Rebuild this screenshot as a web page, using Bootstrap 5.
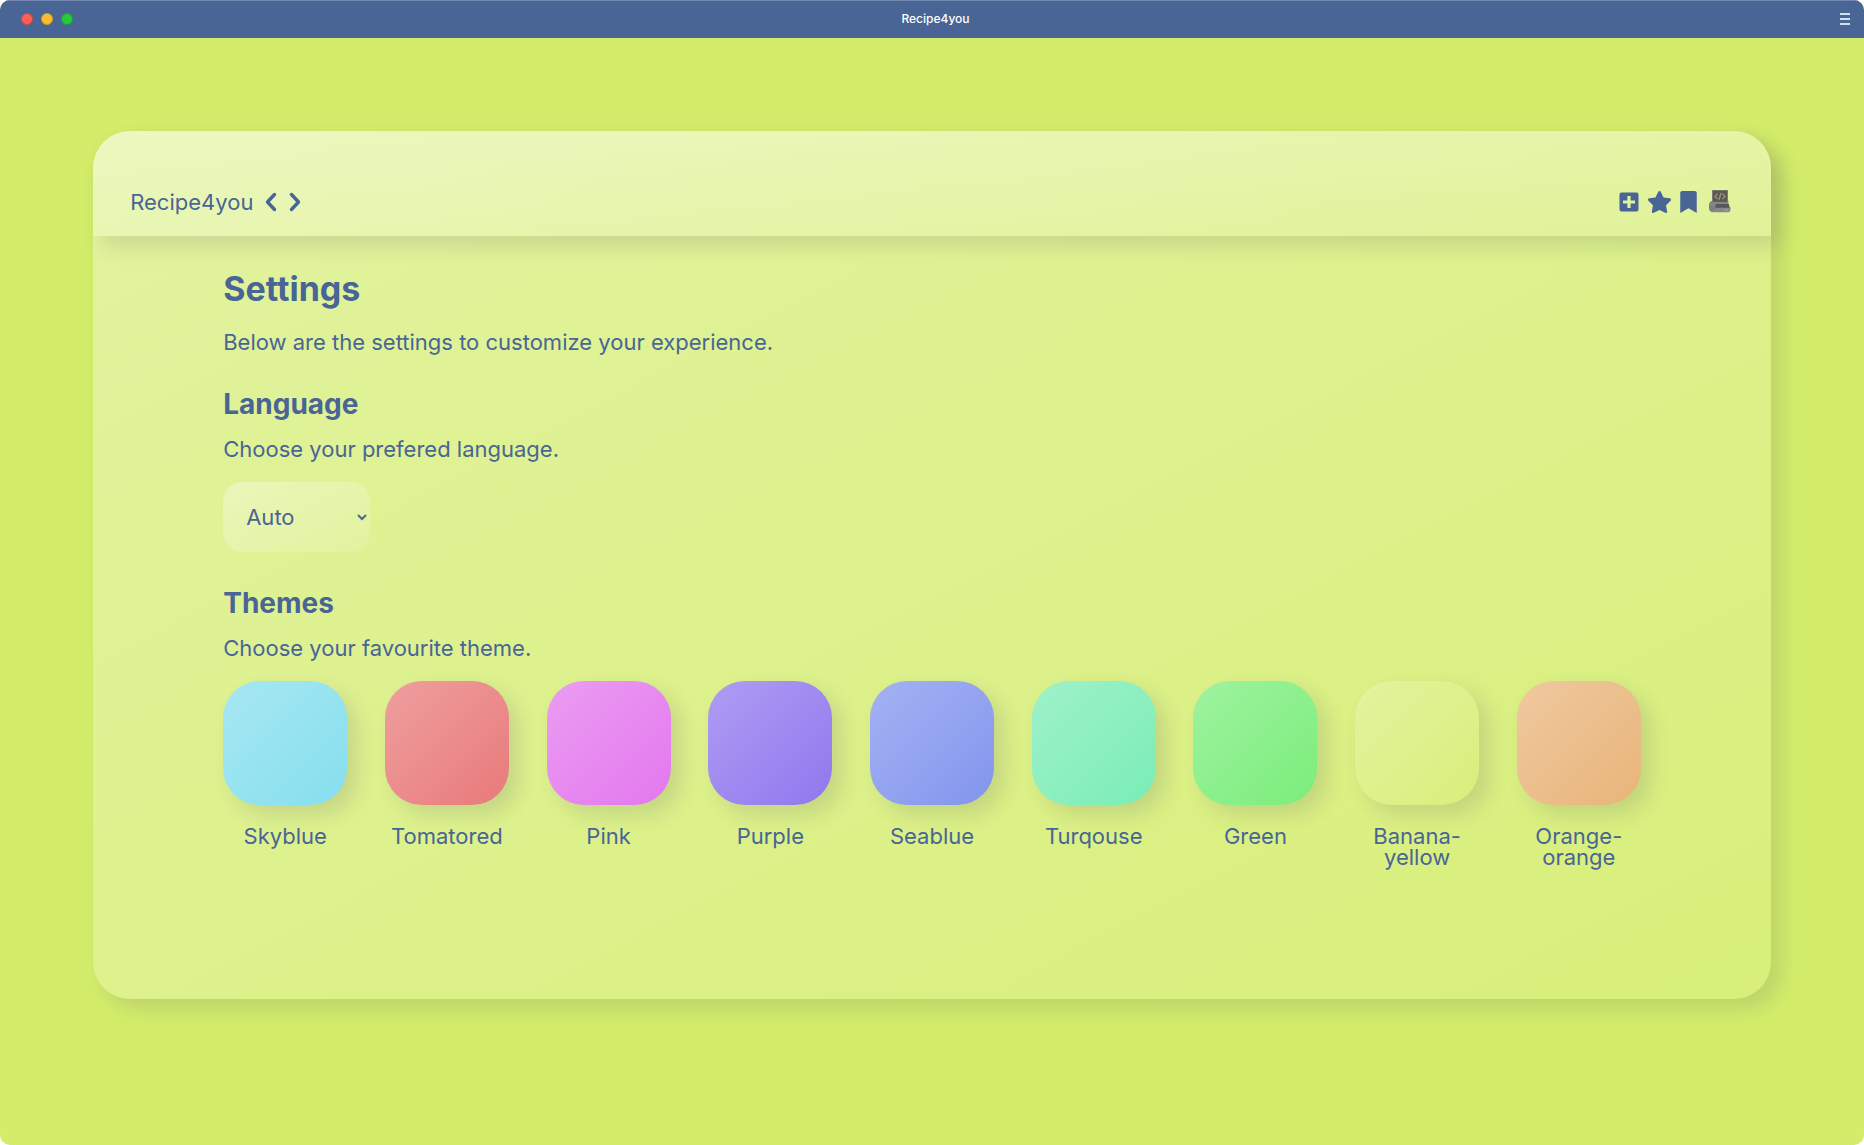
<!DOCTYPE html>
<html lang="en">
<head>
<meta charset="utf-8">
<meta name="viewport" content="width=device-width, initial-scale=1">
<title>Recipe4you</title>
<link href="https://cdn.jsdelivr.net/npm/bootstrap@5.3.0/dist/css/bootstrap.min.css" rel="stylesheet">
<style>
  :root {
    --ink: #496595;
    --page: #d3ed6b;
    --shade: rgba(66, 66, 104, .15);
  }
  body { background: #fff; color: var(--ink); font-family: Inter, "Open Sans", sans-serif; font-size: 22px; line-height: 30px; }
  .app-window { background: var(--page); border-radius: 10px; overflow: hidden; }
  .titlebar { height: 38px; background: var(--ink); border-top: 1px solid #7289b0; padding: 0 14px 2px; }
  .titlebar-name { color: #fff; font-size: 12px; line-height: 16px; font-weight: 500; }
  .lights { padding-left: 7px; }
  .light { width: 12px; height: 12px; border-radius: 50%; border: 1px solid; padding: 0; display: block; }
  .light-close { background: #ff5f57; border-color: #d9453f; }
  .light-min { background: #febc2e; border-color: #d39b1f; }
  .light-max { background: #28c840; border-color: #1ba530; }
  .bare { background: none; border: 0; padding: 0; color: inherit; display: block; line-height: 0; }
  .stage { padding: 5%; }
  .glass, .glass-head { background-image: linear-gradient(to right bottom, rgba(255,255,255,.35), rgba(255,255,255,.1)); }
  .glass { border-radius: 37px; box-shadow: 10px 10px 20px var(--shade); }
  .glass-head { border-radius: 37px 37px 0 0; box-shadow: 10px 10px 20px var(--shade); padding: 56px 40px 19px 37px; }
  .brand-link { color: inherit; text-decoration: none; }
  .settings { padding: 32px 130px 131px; }
  h1 { font-size: 34px; line-height: 42px; font-weight: 700; margin: 0 0 17px; }
  h2 { font-size: 28px; line-height: 36px; font-weight: 700; margin: 0 0 12px; }
  .settings p { margin: 0; }
  .block-gap { margin-top: 29px; }
  .lang-select {
    width: 147px; height: 70px; margin: 18px 0 33px; border: 0; border-radius: 19px; padding: 0 23px; color: inherit; font-size: 22px;
    appearance: none; background-color: transparent; background-repeat: no-repeat;
    background-image: url("data:image/svg+xml,%3Csvg xmlns='http://www.w3.org/2000/svg' viewBox='0 0 10 8'%3E%3Cpath d='M1 2l4 4 4-4' fill='none' stroke='%23496595' stroke-width='2'/%3E%3C/svg%3E"), linear-gradient(to right bottom, rgba(255,255,255,.35), rgba(255,255,255,.1));
    background-size: 10px 8px, 100% 100%; background-position: right 3px center, 0 0;
  }
  .theme-list { margin-top: 18px; }
  .theme-btn { background: none; border: 0; padding: 0; width: 124px; color: inherit; line-height: 21px; }
  .swatch { display: block; width: 124px; height: 124px; border-radius: 37px; margin-bottom: 21px; box-shadow: 10px 10px 20px var(--shade);
    background-image: linear-gradient(to right bottom, rgba(255,255,255,.35), rgba(255,255,255,.1)); }
  .sky { background-color: #78dbec; } .tomato { background-color: #e66b6b; } .pink { background-color: #e068ec; }
  .purple { background-color: #8468ec; } .sea { background-color: #7489ec; } .turq { background-color: #6bebad; }
  .green { background-color: #6bec6b; } .banana { background-color: #d3ed6b; } .orange { background-color: #e6ac6b; }
</style>
</head>
<body>
<div class="app-window min-vh-100">
  <header class="titlebar d-flex align-items-center justify-content-between">
    <div class="col d-flex gap-2 lights">
      <button class="light light-close" aria-label="Close"></button>
      <button class="light light-min" aria-label="Minimize"></button>
      <button class="light light-max" aria-label="Zoom"></button>
    </div>
    <span class="titlebar-name">Recipe4you</span>
    <div class="col d-flex justify-content-end">
      <button class="bare" aria-label="Menu"><svg width="10" height="13" viewBox="0 0 10 13" fill="#d3deee"><path d="M0 1h10v2H0zM0 6h10v2H0zM0 11h10v2H0z"/></svg></button>
    </div>
  </header>

  <div class="stage">
    <div class="glass">
      <nav class="glass-head d-flex align-items-center justify-content-between" aria-label="Main">
        <div class="d-flex align-items-center">
          <a class="brand-link me-2" href="#">Recipe4you</a>
          <button class="bare ms-1" aria-label="Back"><svg width="12" height="20" viewBox="0 0 12 20" fill="none" stroke="currentColor" stroke-width="3.4" stroke-linecap="round" stroke-linejoin="round"><path d="M9.500 2.500L2.500 10l7 7.500"/></svg></button>
          <button class="bare ms-2 ps-1" aria-label="Forward"><svg width="12" height="20" viewBox="0 0 12 20" fill="none" stroke="currentColor" stroke-width="3.4" stroke-linecap="round" stroke-linejoin="round"><path d="M2.500 2.500l7 7.500-7 7.500"/></svg></button>
        </div>
        <div class="d-flex align-items-center">
          <a class="bare" href="#" aria-label="Add"><svg width="20" height="20" viewBox="0 0 20 20" fill="currentColor"><path fill-rule="evenodd" d="M2.500.500h15a2 2 0 0 1 2 2v15a2 2 0 0 1-2 2h-15a2 2 0 0 1-2-2v-15a2 2 0 0 1 2-2zM8.400 4v4.400H4v3.200h4.400V16h3.200v-4.400H16V8.400h-4.400V4z"/></svg></a>
          <a class="bare ms-2" href="#" aria-label="Favourites"><svg width="25" height="22" viewBox="0 0 576 512" fill="currentColor"><path d="M259.300 17.800L194 150.200 47.900 171.500c-26.200 3.800-36.700 36.100-17.700 54.600l105.700 103-25 145.500c-4.500 26.300 23.200 46 46.400 33.700L288 439.600l130.700 68.700c23.200 12.200 50.900-7.400 46.400-33.700l-25-145.500 105.700-103c19-18.500 8.500-50.800-17.700-54.600L382 150.200 316.700 17.800c-11.700-23.600-45.600-23.900-57.400 0z"/></svg></a>
          <a class="bare ms-2" href="#" aria-label="Bookmarks"><svg width="17" height="22" viewBox="0 0 384 512" fill="currentColor"><path d="M0 512V48C0 21.500 21.500 0 48 0h288c26.500 0 48 21.500 48 48v464L192 400z"/></svg></a>
          <a class="bare ms-2 ps-1" href="#" aria-label="Developer"><svg width="22" height="24" viewBox="0 0 22 24"><path d="M2 11h17.500v3.500l2 3v3l-1.500 1.800H2.500L1 21l-1-1.500v-6z" fill="#86898a"/><path d="M0 15.500h6v5H2L0 18z" fill="#7b7f83"/><path d="M3 0h16v12.500H3z" fill="#817e70"/><path d="M4 .8h14v11H4z" fill="#58595a"/><path d="M6.500 14H20v3.800H6.500z" fill="#55575a"/><path d="M8.500 3.700L6 6.400l2.500 2.700M13.500 3.700L16 6.400l-2.500 2.700M12 3l-2 6.800" fill="none" stroke="#b99563" stroke-width="1.200"/><path d="M15 20h4" stroke="#a4a4a0"/></svg></a>
        </div>
      </nav>

      <main class="settings">
        <h1>Settings</h1>
        <p>Below are the settings to customize your experience.</p>

        <section class="block-gap">
          <h2>Language</h2>
          <p><label for="language">Choose your prefered language.</label></p>
          <select id="language" class="lang-select d-block"><option>Auto</option></select>
        </section>

        <section>
          <h2>Themes</h2>
          <p>Choose your favourite theme.</p>
          <div class="theme-list d-flex flex-wrap justify-content-between align-items-start">
            <button class="theme-btn"><span class="swatch sky"></span>Skyblue</button>
            <button class="theme-btn"><span class="swatch tomato"></span>Tomatored</button>
            <button class="theme-btn"><span class="swatch pink"></span>Pink</button>
            <button class="theme-btn"><span class="swatch purple"></span>Purple</button>
            <button class="theme-btn"><span class="swatch sea"></span>Seablue</button>
            <button class="theme-btn"><span class="swatch turq"></span>Turqouse</button>
            <button class="theme-btn"><span class="swatch green"></span>Green</button>
            <button class="theme-btn"><span class="swatch banana"></span>Banana-<br>yellow</button>
            <button class="theme-btn"><span class="swatch orange"></span>Orange-<br>orange</button>
          </div>
        </section>
      </main>
    </div>
  </div>
</div>
<script src="https://cdn.jsdelivr.net/npm/bootstrap@5.3.0/dist/js/bootstrap.bundle.min.js"></script>
</body>
</html>
